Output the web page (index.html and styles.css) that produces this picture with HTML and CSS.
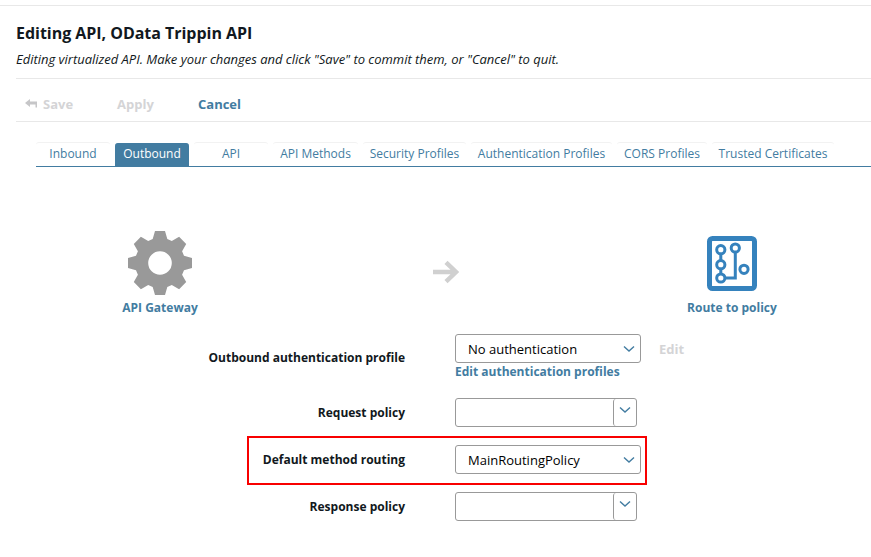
FILE: index.html
```
<!DOCTYPE html>
<html lang="en">
<head>
<meta charset="utf-8">
<title>Editing API</title>
<link rel="stylesheet" href="styles.css">
</head>
<body>
<main class="page">
  <header class="heading">
    <h1>Editing API, OData Trippin API</h1>
    <p>Editing virtualized API. Make your changes and click "Save" to commit them, or "Cancel" to quit.</p>
  </header>
  <div class="actions">
    <span class="action save"><svg width="12" height="9" viewBox="0 0 12 9"><path d="M0 4 5 0V2.500H12V8.500H10.500V5.500H5V8Z" fill="#c6c6c8"/></svg>Save</span>
    <span class="action apply">Apply</span>
    <a class="action cancel">Cancel</a>
  </div>
  <nav class="tabs">
    <a class="tab w74">Inbound</a>
    <a class="tab w74 active">Outbound</a>
    <a class="tab w74">API</a>
    <a class="tab w85">API Methods</a>
    <a class="tab w103">Security Profiles</a>
    <a class="tab w141">Authentication Profiles</a>
    <a class="tab w90">CORS Profiles</a>
    <a class="tab w122">Trusted Certificates</a>
  </nav>
  <section class="flow">
    <div class="node gateway">
      <svg width="66" height="66" viewBox="-33 -33 66 66"><path fill="#999" fill-rule="evenodd" d="M-7.300-24-5-32H5L7.300-24 11.800-22.100 19.100-26.200 26.200-19.100 22.100-11.800 24-7.300 32-5V5L24 7.300 22.100 11.800 26.200 19.100 19.100 26.200 11.800 22.100 7.300 24 5 32H-5L-7.300 24-11.800 22.100-19.100 26.200-26.200 19.100-22.100 11.800-24 7.300-32 5V-5L-24-7.300-22.100-11.800-26.200-19.100-19.100-26.200-11.800-22.100ZM0-11.800A11.800 11.800 0 1 0 0 11.800 11.800 11.800 0 1 0 0-11.800Z"/></svg>
      <span>API Gateway</span>
    </div>
    <svg class="arrow" width="26" height="24" viewBox="0 0 26 24"><path d="M0 12H23M13 2.300 23 12 13 21.700" fill="none" stroke="#d0d0d0" stroke-width="4.400"/></svg>
    <div class="node route">
      <svg width="50" height="55" viewBox="0 0 50 55" fill="none" stroke="#3582bd"><rect x="2.500" y="2.500" width="45" height="50" rx="3" stroke-width="5"/><path d="M13.800 17.500V25M13.800 32V38M18 42H28.300V16" stroke-width="3"/><g stroke-width="3"><circle cx="13.800" cy="13.700" r="4.100"/><circle cx="13.800" cy="28.700" r="4.100"/><circle cx="13.800" cy="42" r="4.100"/><circle cx="28.300" cy="12" r="4.100"/><circle cx="37" cy="33.300" r="4.100"/></g></svg>
      <span>Route to policy</span>
    </div>
  </section>
  <form class="form">
    <div class="row auth">
      <label>Outbound authentication profile</label>
      <div class="field">
        <div class="line"><div class="select"><span>No authentication</span><svg class="chev" width="12" height="8" viewBox="0 0 12 8"><path d="M1 1.500 6 6 11 1.500"/></svg></div><span class="edit">Edit</span></div>
        <a class="profiles">Edit authentication profiles</a>
      </div>
    </div>
    <div class="row">
      <label>Request policy</label>
      <div class="combo"><div class="drop"><svg class="chev" width="12" height="8" viewBox="0 0 12 8"><path d="M1 1.500 6 6 11 1.500"/></svg></div></div>
    </div>
    <div class="row marked">
      <label>Default method routing</label>
      <div class="select"><span>MainRoutingPolicy</span><svg class="chev" width="12" height="8" viewBox="0 0 12 8"><path d="M1 1.500 6 6 11 1.500"/></svg></div>
    </div>
    <div class="row">
      <label>Response policy</label>
      <div class="combo"><div class="drop"><svg class="chev" width="12" height="8" viewBox="0 0 12 8"><path d="M1 1.500 6 6 11 1.500"/></svg></div></div>
    </div>
  </form>
</main>
</body>
</html>
```
FILE: styles.css
```
*, *::after { box-sizing: border-box; }
body { margin: 0; background: #fff; color: #111820; font: 12px/18px "Open Sans", "Noto Sans", sans-serif; }
svg { display: block; flex: none; }
.page { margin-top: 5px; height: 552px; border-top: 1px solid #e8e8e8; overflow: hidden; white-space: nowrap; }
.heading { margin-left: 16px; height: 73px; padding-top: 16px; border-bottom: 1px solid #e8e8e8; }
h1 { margin: 0; font-size: 16px; line-height: 22px; font-weight: 700; letter-spacing: -0.03px; }
p { margin: 6px 0 0; font-size: 13px; line-height: 18px; font-style: italic; letter-spacing: -0.016px; }
.actions { margin-left: 16px; height: 43px; padding: 7px 0 0 9px; border-bottom: 1px solid #e8e8e8; display: flex; align-items: center; font-size: 13px; font-weight: 700; }
.action { color: #d4d4d6; }
.save { display: flex; align-items: center; gap: 6px; width: 92px; }
.apply { width: 81px; }
.cancel { color: #427ca1; }
.tabs { margin: 20px 0 0 36px; height: 25px; display: flex; gap: 5px; border-bottom: 1px solid #427ca1; }
.tab { flex: none; height: 24px; border-top: 1px solid #f2f2f2; border-radius: 3px 3px 0 0; text-align: center; line-height: 22px; color: #427ca1; }
.active { background: #427ca1; color: #fff; border-color: #427ca1; margin-top: 1px; height: 23px; line-height: 20px; }
.w74 { width: 74px; }
.w85 { width: 85px; }
.w90 { width: 90px; }
.w103 { width: 103px; }
.w122 { width: 122px; }
.w141 { width: 141px; }
.flow { display: flex; height: 167px; padding-top: 63px; }
.node { display: flex; flex-direction: column; align-items: center; color: #427ca1; font-weight: 700; }
.gateway { width: 100px; margin-left: 110px; }
.gateway span { margin-top: 3px; }
.arrow { margin: 30px 0 0 223px; }
.route { width: 110px; margin-left: 218px; padding-top: 6px; }
.route span { margin-top: 8px; }
.form { display: flex; flex-direction: column; }
.row { display: grid; grid-template-columns: 405px 1fr; column-gap: 50px; height: 47px; position: relative; }
.auth { height: 64px; }
label { font-weight: 700; text-align: right; line-height: 30px; }
.auth label { padding-top: 9px; }
.line { display: flex; align-items: center; }
.select { width: 186px; height: 29px; border: 1px solid #999; border-radius: 3px; display: flex; align-items: center; justify-content: space-between; padding: 0 5px 0 12px; font-size: 13px; color: #000; }
.edit { margin-left: 18px; color: #d4d4d6; font-size: 13px; font-weight: 700; }
.profiles { display: block; color: #427ca1; font-weight: 700; }
.combo { width: 182px; height: 29px; border: 1px solid #999; border-radius: 3px; display: flex; justify-content: flex-end; }
.drop { width: 23px; border-left: 1px solid #999; border-radius: 3px 0 0 3px; padding: 7px 0 0 5px; }
.chev path { fill: none; stroke: #427ca1; stroke-width: 1.4; }
.marked::after { content: ""; position: absolute; left: 247px; top: -9px; width: 400px; height: 49px; border: 2px solid #f80000; }
```
